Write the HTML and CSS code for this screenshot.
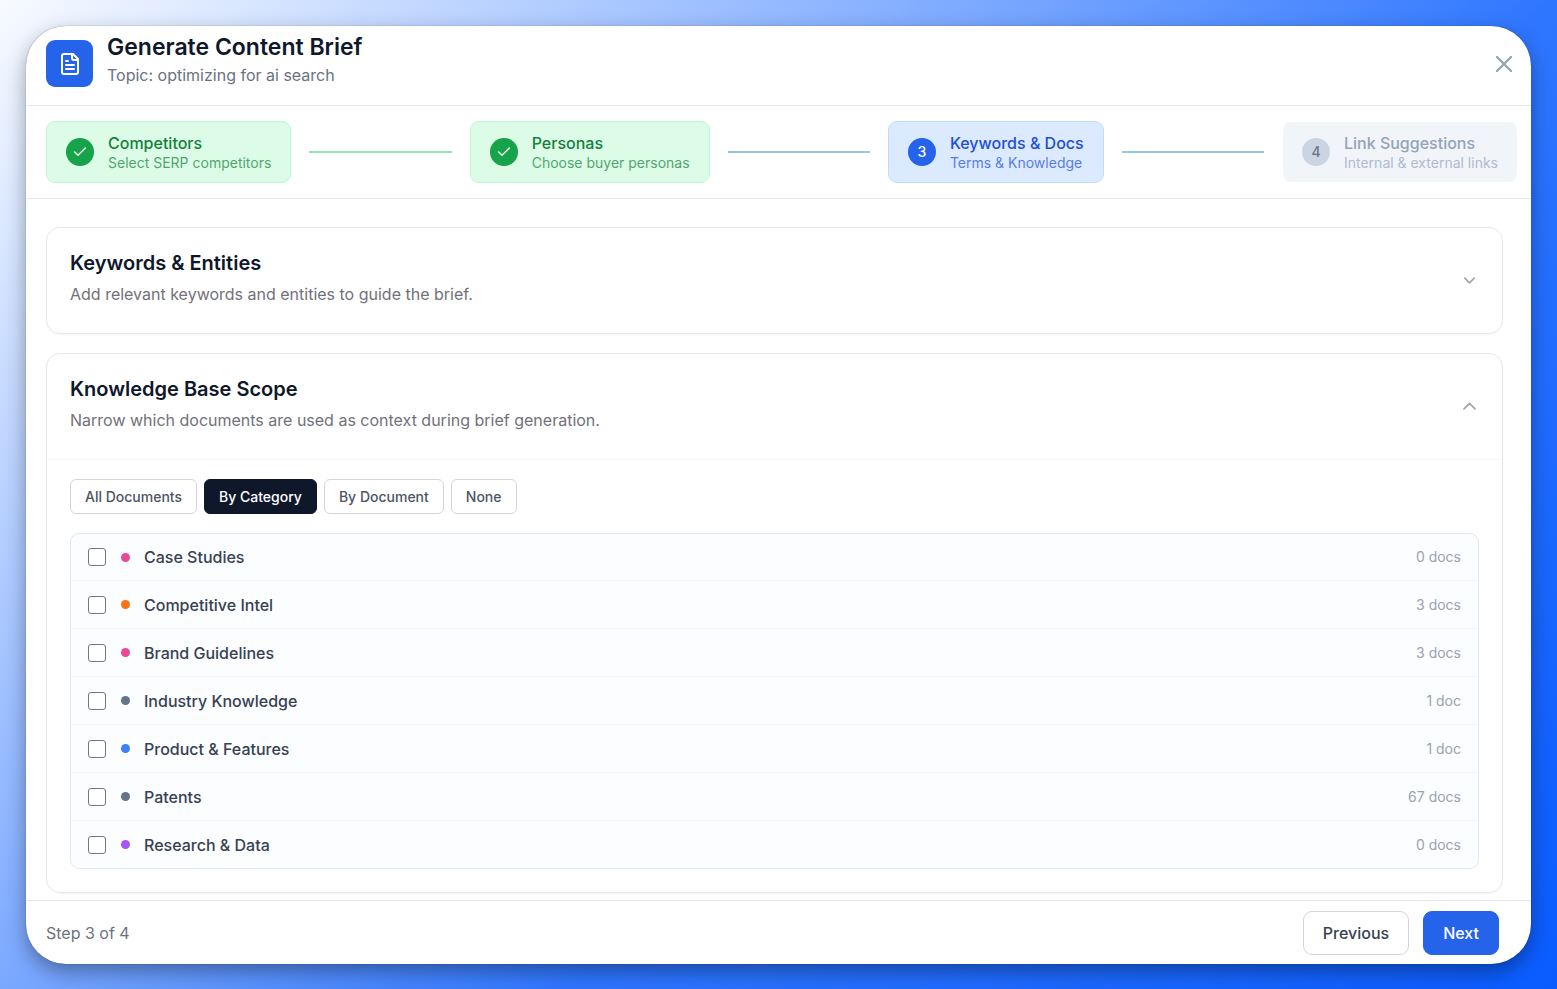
FILE: index.html
```html
<!DOCTYPE html>
<html lang="en">

<head>
    <meta charset="UTF-8">
    <meta name="viewport" content="width=device-width, initial-scale=1.0">
    <title>Generate Content Brief</title>
    <link rel="stylesheet" href="styles.css">
</head>

<body>
    <main class="modal">
        <header class="modal-header">
            <div class="modal-icon">
                <svg width="24" height="24" viewBox="0 0 24 24" fill="none" stroke="currentColor" stroke-width="2" stroke-linecap="round" stroke-linejoin="round">
                    <path d="M15 2H6a2 2 0 0 0-2 2v16a2 2 0 0 0 2 2h12a2 2 0 0 0 2-2V7Z" />
                    <path d="M14 2v4a2 2 0 0 0 2 2h4M10 9H8M16 13H8M16 17H8" />
                </svg>
            </div>
            <div class="modal-heading">
                <h1>Generate Content Brief</h1>
                <p>Topic: optimizing for ai search</p>
            </div>
            <button class="close" type="button" aria-label="Close">
                <svg width="28" height="28" viewBox="0 0 24 24" fill="none" stroke="currentColor" stroke-width="2" stroke-linecap="round">
                    <path d="M18 6 6 18M6 6l12 12" />
                </svg>
            </button>
        </header>

        <nav class="stepper">
            <button class="step done" type="button">
                <span class="step-mark">
                    <svg width="16" height="16" viewBox="0 0 24 24" fill="none" stroke="currentColor" stroke-width="2" stroke-linecap="round" stroke-linejoin="round"><path d="M20 6 9 17l-5-5" /></svg>
                </span>
                <span class="step-text">
                    <span class="step-title">Competitors</span>
                    <span class="step-note">Select SERP competitors</span>
                </span>
            </button>
            <span class="step-line line-done"></span>
            <button class="step done" type="button">
                <span class="step-mark">
                    <svg width="16" height="16" viewBox="0 0 24 24" fill="none" stroke="currentColor" stroke-width="2" stroke-linecap="round" stroke-linejoin="round"><path d="M20 6 9 17l-5-5" /></svg>
                </span>
                <span class="step-text">
                    <span class="step-title">Personas</span>
                    <span class="step-note">Choose buyer personas</span>
                </span>
            </button>
            <span class="step-line"></span>
            <button class="step current" type="button" aria-current="step">
                <span class="step-mark">3</span>
                <span class="step-text">
                    <span class="step-title">Keywords &amp; Docs</span>
                    <span class="step-note">Terms &amp; Knowledge</span>
                </span>
            </button>
            <span class="step-line"></span>
            <button class="step upcoming" type="button" disabled>
                <span class="step-mark">4</span>
                <span class="step-text">
                    <span class="step-title">Link Suggestions</span>
                    <span class="step-note">Internal &amp; external links</span>
                </span>
            </button>
        </nav>

        <div class="content">
            <section class="card">
                <button class="card-header" type="button" aria-expanded="false">
                    <span class="card-heading">
                        <span class="card-title">Keywords &amp; Entities</span>
                        <span class="card-note">Add relevant keywords and entities to guide the brief.</span>
                    </span>
                    <svg class="chevron" width="19" height="19" viewBox="0 0 24 24" fill="none" stroke="currentColor" stroke-width="2" stroke-linecap="round" stroke-linejoin="round"><path d="m6 9 6 6 6-6" /></svg>
                </button>
            </section>

            <section class="card">
                <button class="card-header" type="button" aria-expanded="true">
                    <span class="card-heading">
                        <span class="card-title">Knowledge Base Scope</span>
                        <span class="card-note">Narrow which documents are used as context during brief generation.</span>
                    </span>
                    <svg class="chevron" width="19" height="19" viewBox="0 0 24 24" fill="none" stroke="currentColor" stroke-width="2" stroke-linecap="round" stroke-linejoin="round"><path d="m5 15 7-7 7 7" /></svg>
                </button>
                <div class="card-body">
                    <div class="filters">
                        <button class="filter" type="button">All Documents</button>
                        <button class="filter active" type="button">By Category</button>
                        <button class="filter" type="button">By Document</button>
                        <button class="filter" type="button">None</button>
                    </div>
                    <div class="categories">
                        <label class="category">
                            <input type="checkbox">
                            <span class="dot pink"></span>
                            <span class="category-name">Case Studies</span>
                            <span class="count">0 docs</span>
                        </label>
                        <label class="category">
                            <input type="checkbox">
                            <span class="dot orange"></span>
                            <span class="category-name">Competitive Intel</span>
                            <span class="count">3 docs</span>
                        </label>
                        <label class="category">
                            <input type="checkbox">
                            <span class="dot pink"></span>
                            <span class="category-name">Brand Guidelines</span>
                            <span class="count">3 docs</span>
                        </label>
                        <label class="category">
                            <input type="checkbox">
                            <span class="dot slate"></span>
                            <span class="category-name">Industry Knowledge</span>
                            <span class="count">1 doc</span>
                        </label>
                        <label class="category">
                            <input type="checkbox">
                            <span class="dot blue"></span>
                            <span class="category-name">Product &amp; Features</span>
                            <span class="count">1 doc</span>
                        </label>
                        <label class="category">
                            <input type="checkbox">
                            <span class="dot slate"></span>
                            <span class="category-name">Patents</span>
                            <span class="count">67 docs</span>
                        </label>
                        <label class="category">
                            <input type="checkbox">
                            <span class="dot purple"></span>
                            <span class="category-name">Research &amp; Data</span>
                            <span class="count">0 docs</span>
                        </label>
                    </div>
                </div>
            </section>
        </div>

        <footer class="modal-footer">
            <span class="progress">Step 3 of 4</span>
            <button class="btn" type="button">Previous</button>
            <button class="btn primary" type="button">Next</button>
        </footer>
    </main>
</body>

</html>
```
FILE: styles.css
```css
* {
    box-sizing: border-box;
}

body {
    margin: 0;
    padding: 26px 26px 25px;
    min-height: 100vh;
    display: flex;
    font-family: Inter, sans-serif;
    font-size: 16px;
    line-height: 20px;
    color: #0f172a;
    background: linear-gradient(135deg, #f8fbff 0%, #7aa8ff 39%, #2f76ff 61%, #0a5cff 100%);
}

button {
    font: inherit;
    color: inherit;
    cursor: pointer;
}

h1,
p {
    margin: 0;
}

.modal {
    flex: 1;
    display: flex;
    flex-direction: column;
    background-color: white;
    border-radius: 40px;
    overflow: hidden;
    box-shadow: 0 0 1px rgba(0, 0, 0, 0.5), 0 8px 20px rgba(0, 0, 0, 0.35);
}

.modal-header {
    display: flex;
    align-items: center;
    gap: 14px;
    height: 80px;
    padding: 0 13px 4px 20px;
    border-bottom: 1px solid #e2e8f0;
}

.modal-icon {
    display: flex;
    align-items: center;
    justify-content: center;
    width: 47px;
    height: 47px;
    border-radius: 9px;
    background-color: #2563eb;
    color: white;
}

.modal-heading {
    flex: 1;
    padding-bottom: 9px;
}

.modal-heading h1 {
    font-size: 23px;
    line-height: 32px;
    font-weight: 600;
}

.modal-heading p {
    line-height: 24px;
    color: #6b7280;
}

.close {
    display: flex;
    padding: 0;
    border: none;
    background: none;
    color: #94a3b8;
}

.stepper {
    display: flex;
    align-items: center;
    gap: 18px;
    padding: 15px 13px 15px 20px;
    border-bottom: 1px solid #e2e8f0;
}

.step {
    display: flex;
    align-items: center;
    gap: 14px;
    height: 62px;
    padding: 0 19px;
    border: 1px solid #bbf7d0;
    border-radius: 9px;
    text-align: left;
}

.step-mark {
    display: flex;
    align-items: center;
    justify-content: center;
    width: 28px;
    height: 28px;
    border-radius: 50%;
    font-size: 14px;
    font-weight: 500;
    color: white;
}

.step-text {
    display: flex;
    flex-direction: column;
    padding-top: 2px;
}

.step-title {
    font-weight: 500;
}

.step-note {
    font-size: 14px;
    opacity: 0.7;
}

.step-line {
    flex: 1;
    height: 2px;
    background-color: #93c5e8;
}

.line-done {
    background-color: #95e2b3;
}

.done {
    background-color: #dcfce7;
    color: #15803d;
}

.done .step-mark {
    background-color: #16a34a;
}

.current {
    background-color: #dbeafe;
    border-color: #bfdbfe;
    color: #1d4ed8;
}

.current .step-mark {
    background-color: #2563eb;
}

.upcoming {
    background-color: #f1f5f9;
    border-color: white;
    color: #94a3b8;
}

.upcoming .step-mark {
    background-color: #cbd5e1;
    color: #64748b;
}

.content {
    flex: 1;
    display: flex;
    flex-direction: column;
    gap: 19px;
    padding: 28px 28px 7px 20px;
}

.card {
    border: 1px solid #e5e7eb;
    border-radius: 14px;
    box-shadow: 0 1px 2px rgba(0, 0, 0, 0.04);
}

.card-header {
    display: flex;
    align-items: center;
    width: 100%;
    height: 105px;
    padding: 0 23px;
    border: none;
    background: none;
    text-align: left;
}

.card-heading {
    flex: 1;
    display: flex;
    flex-direction: column;
    gap: 3px;
    padding-bottom: 4px;
}

.card-title {
    font-size: 20px;
    line-height: 28px;
    font-weight: 600;
}

.card-note {
    line-height: 28px;
    color: #71717a;
}

.chevron {
    color: #9ca3af;
}

.card-body {
    padding: 19px 23px 23px;
    border-top: 1px solid #f1f5f9;
}

.filters {
    display: flex;
    gap: 7px;
    margin-bottom: 19px;
}

.filter {
    height: 35px;
    padding: 0 14px;
    border: 1px solid #d1d5db;
    border-radius: 6px;
    background-color: white;
    font-size: 14px;
    font-weight: 500;
    color: #4b5563;
}

.filter.active {
    background-color: #0f172a;
    border-color: #0f172a;
    color: white;
}

.categories {
    border: 1px solid #e2e8f0;
    border-radius: 9px;
    background-color: #fbfdff;
}

.category {
    display: flex;
    align-items: center;
    height: 48px;
    padding: 0 17px;
    border-top: 1px solid #f1f5f9;
    cursor: pointer;
}

.category:first-child {
    height: 46px;
    border-top: none;
}

.category input {
    appearance: none;
    width: 18px;
    height: 18px;
    margin: 0 15px 0 0;
    border: 1px solid #767676;
    border-radius: 3px;
    background-color: white;
}

.category input:checked {
    background-color: #2563eb;
}

.dot {
    width: 9px;
    height: 9px;
    margin-right: 14px;
    border-radius: 50%;
}

.pink {
    background-color: #ec4899;
}

.orange {
    background-color: #f97316;
}

.slate {
    background-color: #64748b;
}

.blue {
    background-color: #3b82f6;
}

.purple {
    background-color: #a855f7;
}

.category-name {
    flex: 1;
    font-weight: 500;
    color: #374151;
}

.count {
    font-size: 14px;
    color: #9ca3af;
}

.modal-footer {
    display: flex;
    align-items: center;
    gap: 14px;
    padding: 10px 32px 9px 20px;
    border-top: 1px solid #e2e8f0;
}

.progress {
    flex: 1;
    color: #6b7280;
}

.btn {
    height: 44px;
    padding: 0 19px;
    border: 1px solid #d1d5db;
    border-radius: 9px;
    background-color: white;
    font-weight: 500;
    color: #374151;
}

.btn.primary {
    background-color: #2563eb;
    border-color: #2563eb;
    color: white;
}
```
